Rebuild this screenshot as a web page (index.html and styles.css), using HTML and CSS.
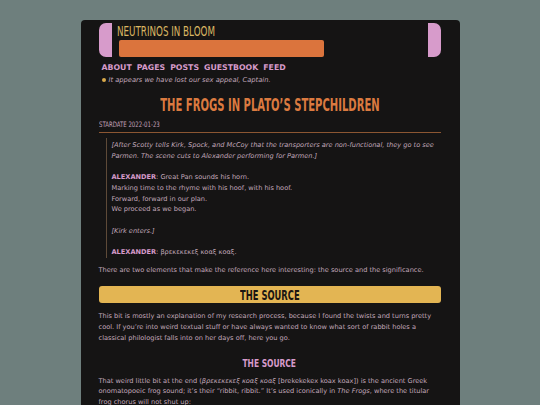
FILE: index.html
```html
<!DOCTYPE html>
<html>
<head>
<meta charset="utf-8">
<link rel="stylesheet" href="styles.css">
</head>
<body>
<div class="page">
  <header class="masthead">
    <div class="cap cap-left"></div>
    <div class="brand">
      <div class="site-title"><span class="squeeze">NEUTRINOS IN BLOOM</span></div>
      <div class="orange-bar"></div>
    </div>
    <div class="cap cap-right"></div>
  </header>
  <nav class="nav">
    <a>ABOUT</a><a>PAGES</a><a>POSTS</a><a>GUESTBOOK</a><a>FEED</a>
  </nav>
  <p class="tagline"><span class="dot"></span><em>It appears we have lost our sex appeal, Captain.</em></p>

  <h1 class="post-title"><span class="squeeze">THE FROGS IN PLATO’S STEPCHILDREN</span></h1>
  <div class="stardate"><span class="squeeze">STARDATE 2022-01-23</span></div>

  <blockquote class="quote">
    <p><em>[After Scotty tells Kirk, Spock, and McCoy that the transporters are non-functional, they go to see Parmen. The scene cuts to Alexander performing for Parmen.]</em></p>
    <p><strong>ALEXANDER</strong>: Great Pan sounds his horn.<br>Marking time to the rhyme with his hoof, with his hoof.<br>Forward, forward in our plan.<br>We proceed as we began.</p>
    <p><em>[Kirk enters.]</em></p>
    <p><strong>ALEXANDER</strong>: βρεκεκεκεξ κοαξ κοαξ.</p>
  </blockquote>

  <p class="text first">There are two elements that make the reference here interesting: the source and the significance.</p>

  <h2 class="banner"><span class="squeeze">THE SOURCE</span></h2>

  <p class="text">This bit is mostly an explanation of my research process, because I found the twists and turns pretty cool. If you’re into weird textual stuff or have always wanted to know what sort of rabbit holes a classical philologist falls into on her days off, here you go.</p>

  <h3 class="subhead"><span class="squeeze">THE SOURCE</span></h3>

  <p class="text after-sub">That weird little bit at the end (<em>βρεκεκεκεξ κοαξ κοαξ</em> [brekekekex koax koax]) is the ancient Greek onomatopoeic frog sound; it’s their “ribbit, ribbit.” It’s used iconically in <em>The Frogs</em>, where the titular frog chorus will not shut up:</p>
</div>
</body>
</html>
```

FILE: styles.css
```css
html, body {
  margin: 0;
  padding: 0;
}
body {
  background: #6e7f7d;
  font-family: "DejaVu Sans", sans-serif;
  overflow: hidden;
}
.page {
  width: 342px;
  margin: 20px auto 0;
  padding: 3px 19px 0 18px;
  background: #151414;
  border-radius: 4px 4px 0 0;
  min-height: 400px;
}
.squeeze {
  display: inline-block;
  white-space: nowrap;
}
.masthead {
  display: flex;
  height: 34px;
}
.cap {
  width: 13px;
  background: #d79bcb;
}
.cap-left {
  border-radius: 7px 0 0 7px;
}
.cap-right {
  border-radius: 0 7px 7px 0;
  margin-left: auto;
}
.brand {
  display: flex;
  flex-direction: column;
  padding-left: 5px;
}
.site-title {
  font-family: "DejaVu Sans Condensed", sans-serif;
  color: #d9b663;
  font-size: 13.5px;
  line-height: 17px;
}
.site-title .squeeze {
  transform: scaleX(0.72);
  transform-origin: left center;
}
.orange-bar {
  margin-left: 2px;
  width: 205px;
  height: 17px;
  background: #db743d;
  border-radius: 2px;
}
.nav {
  display: flex;
  gap: 5px;
  margin-top: 5px;
  padding-left: 3px;
}
.nav a {
  color: #d79bcb;
  font-weight: bold;
  font-size: 7.8px;
  line-height: 11px;
}
.tagline {
  margin: 2px 0 0;
  padding-left: 3px;
  display: flex;
  align-items: center;
  gap: 3px;
  color: #c2a9bb;
  font-size: 6.7px;
  line-height: 10px;
}
.dot {
  width: 4px;
  height: 4px;
  border-radius: 50%;
  background: #d9a94a;
}
.post-title {
  margin: 10px 0 0;
  display: flex;
  justify-content: center;
  font-family: "DejaVu Sans Condensed", sans-serif;
  font-weight: bold;
  font-size: 18px;
  line-height: 20px;
  color: #db7a40;
}
.post-title .squeeze {
  flex: none;
  transform: scaleX(0.62);
}
.stardate {
  margin-top: 5px;
  font-family: "DejaVu Sans Condensed", sans-serif;
  font-size: 7.5px;
  line-height: 9px;
  color: #c4a2bb;
  padding-bottom: 3px;
  border-bottom: 1px solid #8c5632;
}
.stardate .squeeze {
  transform: scaleX(0.8);
  transform-origin: left center;
}
.quote {
  margin: 5px 0 0 7px;
  padding: 2px 0 0 5px;
  border-left: 1px solid #5e4a38;
  color: #c2a9bb;
  font-size: 6.6px;
  line-height: 10.7px;
}
.quote p {
  margin: 0 0 10.7px;
}
.quote p:last-child {
  margin-bottom: 0;
}
.quote strong {
  color: #d79bcb;
}
.text {
  margin: 8px 0 0;
  color: #c2a9bb;
  font-size: 6.6px;
  line-height: 10.7px;
}
.text.first {
  margin-top: 7px;
}
.text.after-sub {
  margin-top: 5px;
}
.banner {
  margin: 11px 0 0;
  height: 17px;
  background: #e3b553;
  border-radius: 3px;
  text-align: center;
  font-family: "DejaVu Sans Condensed", sans-serif;
  font-weight: bold;
  font-size: 13.7px;
  line-height: 18px;
  color: #1b1612;
}
.banner .squeeze {
  transform: scaleX(0.68);
}
.subhead {
  margin: 13px 0 0;
  text-align: center;
  font-family: "DejaVu Sans Condensed", sans-serif;
  font-weight: bold;
  font-size: 11px;
  line-height: 14px;
  color: #d79bcb;
}
.subhead .squeeze {
  transform: scaleX(0.76);
}
```
